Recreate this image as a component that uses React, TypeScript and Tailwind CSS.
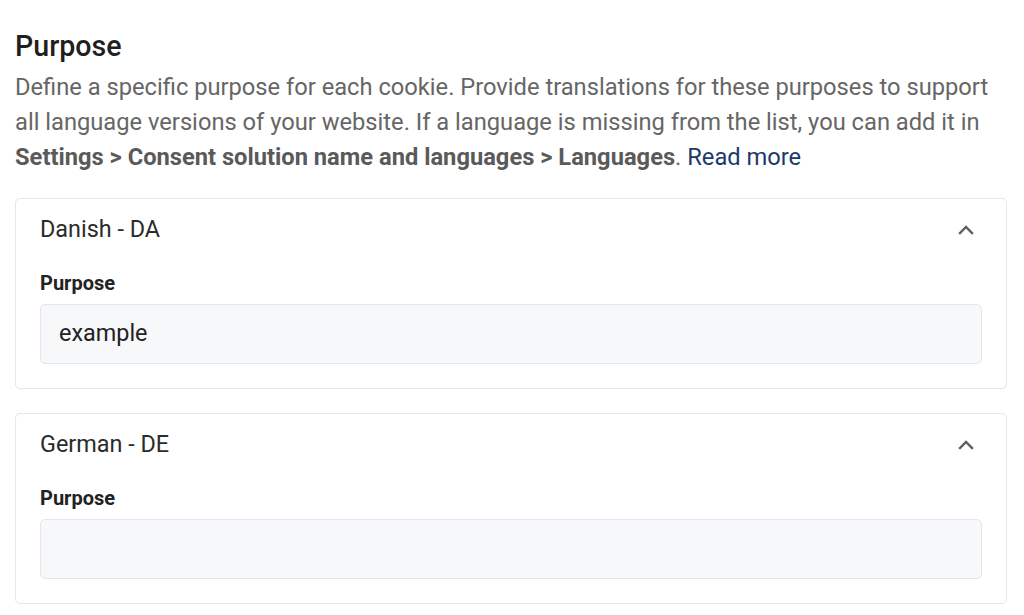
import React from "react";

const font = { fontFamily: "Roboto, 'Noto Sans', Arial, sans-serif" };

function ChevronUp() {
  return (
    <svg width="18" height="12" viewBox="0 0 18 12" fill="none" className="text-[#5f5f5f]">
      <polyline points="3,10 9,4 15,10" stroke="currentColor" strokeWidth="2.4" strokeLinecap="square" />
    </svg>
  );
}

function LanguageCard({ title, value }: { title: string; value: string }) {
  return (
    <div className="rounded-[5px] border border-[#e3e6ee] bg-white px-6 pt-4 pb-6">
      <div className="flex h-7 items-center justify-between">
        <span className="text-[23.4px] leading-7 text-[#2b2b2b]">{title}</span>
        <span className="mr-[7px] flex items-center">
          <ChevronUp />
        </span>
      </div>
      <div className="mt-7 text-[20px] font-bold leading-6 text-[#222]">Purpose</div>
      <div className="mt-[9px] flex h-[60px] items-center rounded-[5px] border border-[#e3e6ee] bg-[#f7f8fa] px-[18px] text-[23.4px] text-[#222]">
        {value}
      </div>
    </div>
  );
}

export default function App() {
  return (
    <div className="min-h-[615px] w-[1024px] bg-white px-[15px] pt-[30px]" style={font}>
      <div className="w-[992px]">
        <h2 className="text-[28.6px] font-medium leading-8 text-[#1f1f1f]">Purpose</h2>
        <p className="mt-2 text-[23.7px] leading-[35px] text-[#666]">
          Define a specific purpose for each cookie. Provide translations for these purposes to support all
          language versions of your website. If a language is missing from the list, you can add it in{" "}
          <strong className="font-bold text-[#5a5a5a]">Settings &gt; Consent solution name and languages &gt; Languages</strong>.{" "}
          <a className="text-[#1c3a6b]">Read more</a>
        </p>
        <div className="mt-[23px] flex flex-col gap-[24px]">
          <LanguageCard title="Danish - DA" value="example" />
          <LanguageCard title="German - DE" value="" />
        </div>
      </div>
    </div>
  );
}
